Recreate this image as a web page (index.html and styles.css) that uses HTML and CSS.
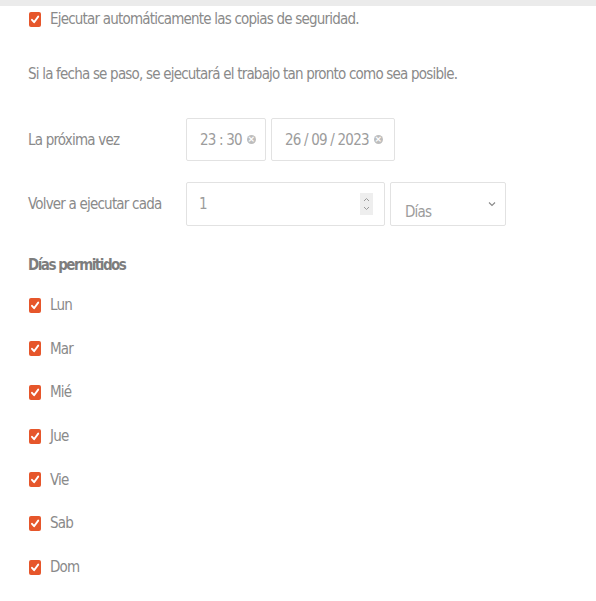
FILE: index.html
```html
<!DOCTYPE html>
<html lang="es">
<head>
<meta charset="utf-8">
<link rel="stylesheet" href="styles.css">
</head>
<body>
<div class="topband"></div>
<main class="content">
  <label class="check first">
    <span class="box"><svg viewBox="0 0 12 15" width="12" height="15"><path d="M3 7.8 L5.1 10.2 L9.2 4.6" fill="none" stroke="#fff" stroke-width="1.9" stroke-linecap="round" stroke-linejoin="round"/></svg></span>
    <span>Ejecutar automáticamente las copias de seguridad.</span>
  </label>
  <p class="note">Si la fecha se paso, se ejecutará el trabajo tan pronto como sea posible.</p>

  <div class="field row-next">
    <span class="flabel">La próxima vez</span>
    <div class="controls">
      <div class="input time"><span class="val">23 : 30</span><span class="clear">×</span></div>
      <div class="input date"><span class="val">26 / 09 / 2023</span><span class="clear">×</span></div>
    </div>
  </div>

  <div class="field row-every">
    <span class="flabel">Volver a ejecutar cada</span>
    <div class="controls">
      <div class="input number"><span class="val">1</span>
        <span class="spin"><svg viewBox="0 0 13 22" width="13" height="22"><path d="M4 8 L6.5 5.5 L9 8 M4 14 L6.5 16.5 L9 14" fill="none" stroke="#9a9a9a" stroke-width="1"/></svg></span>
      </div>
      <div class="input select"><span class="val">Días</span>
        <svg class="chev" viewBox="0 0 8 6" width="8" height="6"><path d="M1 1.5 L4 4.5 L7 1.5" fill="none" stroke="#888" stroke-width="1.1"/></svg>
      </div>
    </div>
  </div>

  <h3 class="heading">Días permitidos</h3>
  <ul class="days">
    <li class="check"><span class="box"><svg viewBox="0 0 12 15" width="12" height="15"><path d="M3 7.8 L5.1 10.2 L9.2 4.6" fill="none" stroke="#fff" stroke-width="1.9" stroke-linecap="round" stroke-linejoin="round"/></svg></span><span>Lun</span></li>
    <li class="check"><span class="box"><svg viewBox="0 0 12 15" width="12" height="15"><path d="M3 7.8 L5.1 10.2 L9.2 4.6" fill="none" stroke="#fff" stroke-width="1.9" stroke-linecap="round" stroke-linejoin="round"/></svg></span><span>Mar</span></li>
    <li class="check"><span class="box"><svg viewBox="0 0 12 15" width="12" height="15"><path d="M3 7.8 L5.1 10.2 L9.2 4.6" fill="none" stroke="#fff" stroke-width="1.9" stroke-linecap="round" stroke-linejoin="round"/></svg></span><span>Mié</span></li>
    <li class="check"><span class="box"><svg viewBox="0 0 12 15" width="12" height="15"><path d="M3 7.8 L5.1 10.2 L9.2 4.6" fill="none" stroke="#fff" stroke-width="1.9" stroke-linecap="round" stroke-linejoin="round"/></svg></span><span>Jue</span></li>
    <li class="check"><span class="box"><svg viewBox="0 0 12 15" width="12" height="15"><path d="M3 7.8 L5.1 10.2 L9.2 4.6" fill="none" stroke="#fff" stroke-width="1.9" stroke-linecap="round" stroke-linejoin="round"/></svg></span><span>Vie</span></li>
    <li class="check"><span class="box"><svg viewBox="0 0 12 15" width="12" height="15"><path d="M3 7.8 L5.1 10.2 L9.2 4.6" fill="none" stroke="#fff" stroke-width="1.9" stroke-linecap="round" stroke-linejoin="round"/></svg></span><span>Sab</span></li>
    <li class="check"><span class="box"><svg viewBox="0 0 12 15" width="12" height="15"><path d="M3 7.8 L5.1 10.2 L9.2 4.6" fill="none" stroke="#fff" stroke-width="1.9" stroke-linecap="round" stroke-linejoin="round"/></svg></span><span>Dom</span></li>
  </ul>
</main>
</body>
</html>
```
FILE: styles.css
```css
html, body {
  margin: 0;
  padding: 0;
  background: #fff;
}
body {
  font-family: "DejaVu Sans Condensed", "DejaVu Sans", sans-serif;
  font-size: 15px;
  letter-spacing: -0.8px;
  color: #8a8a8a;
}
.topband {
  height: 6px;
  background: #ebebeb;
}
.content {
  padding: 3px 0 0 28px;
}
.check {
  display: flex;
  align-items: center;
  height: 20px;
  line-height: 20px;
}
.box {
  width: 12px;
  height: 15px;
  margin-left: 1px;
  margin-right: 9px;
  background: #e6562b;
  border-radius: 2px;
  display: flex;
  flex: none;
}
.note {
  margin: 35px 0 0;
  height: 20px;
  line-height: 20px;
}
.field {
  display: flex;
  align-items: center;
}
.flabel {
  width: 158px;
  flex: none;
}
.controls {
  display: flex;
  gap: 5px;
}
.row-next {
  margin-top: 34px;
}
.row-every {
  margin-top: 21px;
}
.input {
  box-sizing: border-box;
  border: 1px solid #e2e2e2;
  border-radius: 2px;
  display: flex;
  align-items: center;
  color: #9c9c9c;
}
.time, .date {
  height: 43px;
  padding-left: 13px;
}
.time { width: 80px; }
.date { width: 124px; }
.clear {
  display: inline-flex;
  width: 9px;
  height: 9px;
  margin-left: 5px;
  border-radius: 50%;
  background: #bdbdbd;
  color: #fff;
  font-size: 9px;
  line-height: 9px;
  letter-spacing: 0;
  justify-content: center;
  font-family: "DejaVu Sans", sans-serif;
  font-weight: bold;
}
.number, .select {
  height: 44px;
}
.number {
  width: 199px;
  padding: 0 11px 0 12px;
  justify-content: space-between;
}
.spin {
  display: flex;
  background: #eeeeee;
  width: 13px;
  height: 22px;
}
.select {
  width: 116px;
  padding: 16px 9px 0 14px;
  justify-content: space-between;
}
.select .chev {
  margin-top: -16px;
}
.heading {
  margin: 29px 0 0;
  height: 20px;
  line-height: 20px;
  font-size: 15px;
  font-weight: bold;
  letter-spacing: -1.5px;
  color: #7d7d7d;
}
.days {
  list-style: none;
  margin: 20px 0 0;
  padding: 0;
  display: flex;
  flex-direction: column;
  gap: 23.7px;
}
```
